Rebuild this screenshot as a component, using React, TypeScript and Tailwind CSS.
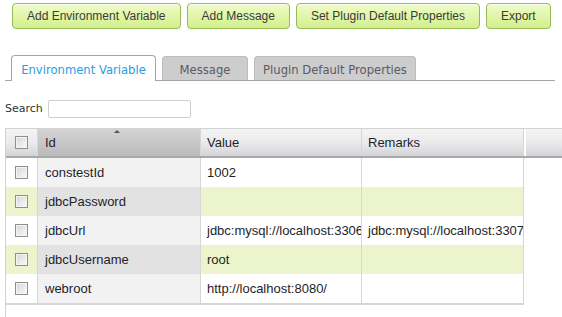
import React from 'react'

const buttons = [
  'Add Environment Variable',
  'Add Message',
  'Set Plugin Default Properties',
  'Export',
]

const tabs = [
  { label: 'Environment Variable', width: 'w-[145px]', active: true },
  { label: 'Message', width: 'w-[86px]', active: false },
  { label: 'Plugin Default Properties', width: 'w-[162px]', active: false },
]

const rows = [
  { id: 'constestId', value: '1002', remarks: '' },
  { id: 'jdbcPassword', value: '', remarks: '' },
  {
    id: 'jdbcUrl',
    value: 'jdbc:mysql://localhost:3306/contest',
    remarks: 'jdbc:mysql://localhost:3307/contest',
  },
  { id: 'jdbcUsername', value: 'root', remarks: '' },
  { id: 'webroot', value: 'http://localhost:8080/', remarks: '' },
]

function Checkbox() {
  return (
    <div className="w-[13px] h-[13px] border border-[#8e8f8f] bg-gradient-to-br from-[#d6d6d6] to-[#fafafa] shadow-[inset_0_0_0_1px_#f4f4f4]" />
  )
}

export default function App() {
  return (
    <div className="w-[562px] h-[317px] bg-white overflow-hidden flex flex-col font-['Liberation_Sans',Arial,sans-serif]">
      {/* toolbar */}
      <div className="flex gap-[6px] pl-[12px] pt-[3px]">
        {buttons.map((b) => (
          <button
            key={b}
            className="h-[26px] px-[14px] rounded-[4px] border border-[#97bb55] bg-gradient-to-b from-[#f0fcc8] to-[#d3ef8c] text-[12px] text-[#3a3a3a] shadow-[inset_0_1px_0_#fbfff0]"
          >
            {b}
          </button>
        ))}
      </div>

      {/* tabs */}
      <div className="mt-[26px] ml-[5px] w-[550px] h-[26px] flex items-end gap-[6px] pl-[6px] border-b border-[#a6a6a6] font-['DejaVu_Sans',Verdana,sans-serif] text-[11.6px]">
        {tabs.map((t) =>
          t.active ? (
            <div
              key={t.label}
              className={`${t.width} h-[26px] -mb-px flex items-center justify-center pt-[5px] bg-white border border-b-0 border-[#a6a6a6] rounded-t-[4px] text-[#2b9be3]`}
            >
              {t.label}
            </div>
          ) : (
            <div
              key={t.label}
              className={`${t.width} h-[24px] flex items-center justify-center pt-[4px] bg-[#cdcdcd] border border-b-0 border-[#bdbdbd] rounded-t-[4px] text-[#5b5a66]`}
            >
              {t.label}
            </div>
          ),
        )}
      </div>

      {/* search */}
      <div className="mt-[19px] ml-[5px] flex items-center gap-[5px] font-['DejaVu_Sans',Verdana,sans-serif] text-[11px] text-[#333]">
        <span>Search</span>
        <input className="w-[143px] h-[18px] border border-[#cfcfcf] rounded-[2px] outline-none" />
      </div>

      {/* grid */}
      <div className="mt-[10px] ml-[5px] flex-1 border-l border-t border-[#d2d2d2] text-[13px] text-[#1e1e2a]">
        <div className="flex h-[29px] border-b-2 border-[#a9a9a9]">
          <div className="w-[32px] shrink-0 flex items-center justify-center border-r border-[#d6d6d6] bg-gradient-to-b from-[#f4f4f4] via-[#ebebeb] to-[#d3d4d8]">
            <Checkbox />
          </div>
          <div className="relative w-[163px] shrink-0 flex items-center pl-[7px] border-r border-[#d6d6d6] bg-gradient-to-b from-[#d4d4d4] to-[#bababa]">
            Id
            <span className="absolute top-[1px] left-[76px] w-0 h-0 border-l-[3px] border-r-[3px] border-b-[3px] border-l-transparent border-r-transparent border-b-[#555]" />
          </div>
          <div className="w-[161px] shrink-0 flex items-center pl-[6px] border-r border-[#d6d6d6] bg-gradient-to-b from-[#f4f4f4] via-[#ebebeb] to-[#d3d4d8]">
            Value
          </div>
          <div className="w-[162px] shrink-0 flex items-center pl-[6px] border-r border-[#d6d6d6] bg-gradient-to-b from-[#f4f4f4] via-[#ebebeb] to-[#d3d4d8]">
            Remarks
          </div>
          <div className="flex-1 ml-[2px] bg-gradient-to-b from-[#f4f4f4] via-[#ebebeb] to-[#d3d4d8]" />
        </div>

        <div className="w-[518px] border-b-2 border-[#d6d6d6]">
          {rows.map((r, i) => {
            const alt = i % 2 === 1
            return (
              <div key={r.id} className={`flex h-[29px] ${alt ? 'bg-[#ebf4cc]' : 'bg-white'}`}>
                <div className="w-[32px] shrink-0 flex items-center justify-center border-r border-[#d6d6d6]">
                  <Checkbox />
                </div>
                <div
                  className={`w-[163px] shrink-0 flex items-center pl-[7px] border-r border-[#d6d6d6] ${alt ? 'bg-[#e2e2e2]' : 'bg-[#f2f2f2]'}`}
                >
                  {r.id}
                </div>
                <div className="w-[161px] shrink-0 flex items-center pl-[6px] border-r border-[#d6d6d6] overflow-hidden whitespace-nowrap">
                  {r.value}
                </div>
                <div className="w-[162px] shrink-0 flex items-center pl-[6px] border-r border-[#d6d6d6] overflow-hidden whitespace-nowrap">
                  {r.remarks}
                </div>
              </div>
            )
          })}
        </div>
      </div>
    </div>
  )
}
